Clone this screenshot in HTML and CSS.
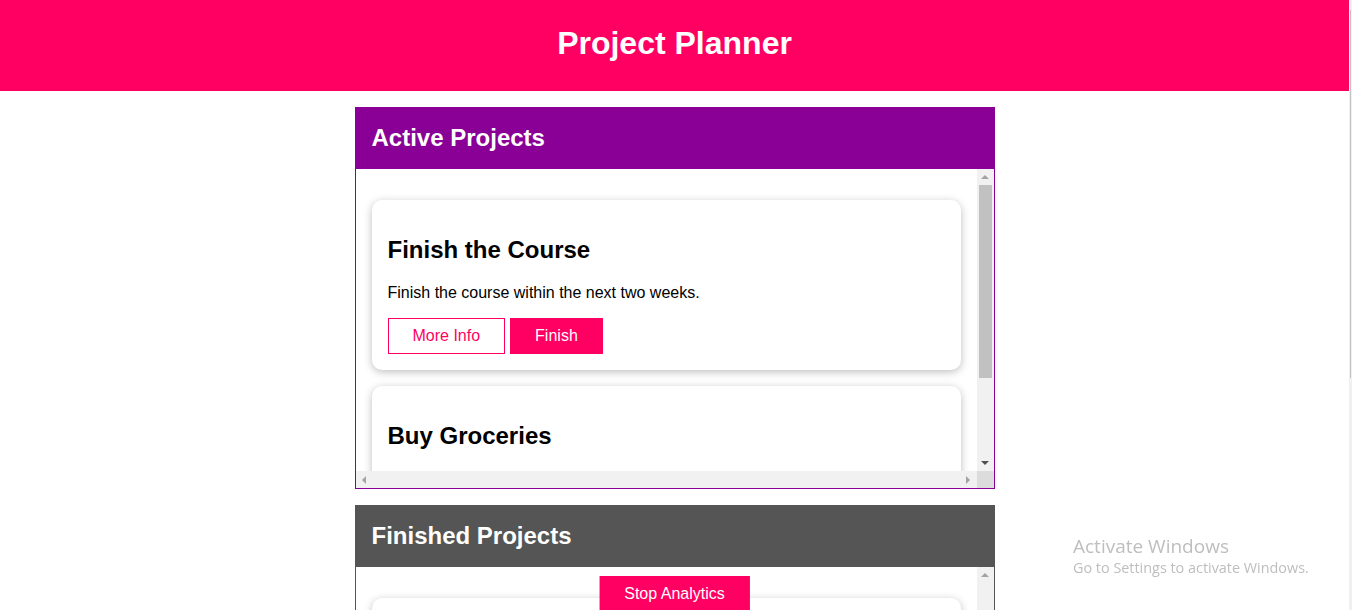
FILE: index.html
```html
<!DOCTYPE html>
<html lang="en">
<head>
<meta charset="utf-8">
<title>Project Planner</title>
<link rel="stylesheet" href="styles.css">
</head>
<body>
<header class="main-header">
  <h1>Project Planner</h1>
</header>
<main class="main">
  <section class="projects projects--active">
    <header class="projects__header">
      <h2>Active Projects</h2>
    </header>
    <div class="projects__box">
      <ul class="projects__list">
        <li class="card">
          <h2>Finish the Course</h2>
          <p>Finish the course within the next two weeks.</p>
          <div class="card__actions">
            <button class="btn btn--alt">More Info</button>
            <button class="btn">Finish</button>
          </div>
        </li>
        <li class="card">
          <h2>Buy Groceries</h2>
          <p>Don't forget to pick up groceries today.</p>
          <div class="card__actions">
            <button class="btn btn--alt">More Info</button>
            <button class="btn">Finish</button>
          </div>
        </li>
      </ul>
      <div class="vbar">
        <span class="sb-btn"><span class="arrow arrow--up"></span></span>
        <span class="sb-thumb"></span>
        <span class="sb-track"></span>
        <span class="sb-btn"><span class="arrow arrow--down"></span></span>
      </div>
      <div class="hbar">
        <span class="sb-btn"><span class="arrow arrow--left"></span></span>
        <span class="sb-track"></span>
        <span class="sb-btn"><span class="arrow arrow--right"></span></span>
      </div>
      <div class="sb-corner"></div>
    </div>
  </section>
  <section class="projects projects--finished">
    <header class="projects__header">
      <h2>Finished Projects</h2>
    </header>
    <div class="projects__box">
      <ul class="projects__list">
        <li class="card">
          <h2>Book Hotel</h2>
          <p>Academind conference takes place in December, don't forget to book a hotel.</p>
          <div class="card__actions">
            <button class="btn btn--alt">More Info</button>
            <button class="btn">Activate</button>
          </div>
        </li>
      </ul>
      <div class="vbar">
        <span class="sb-btn"><span class="arrow arrow--up"></span></span>
        <span class="sb-track"></span>
        <span class="sb-btn"><span class="arrow arrow--down arrow--light"></span></span>
      </div>
      <div class="hbar">
        <span class="sb-btn"><span class="arrow arrow--left"></span></span>
        <span class="sb-track"></span>
        <span class="sb-btn"><span class="arrow arrow--right"></span></span>
      </div>
      <div class="sb-corner"></div>
    </div>
  </section>
</main>
<button class="btn btn--floating">Stop Analytics</button>
<div class="page-scrollbar"><span class="page-scrollbar__thumb"></span></div>
<div class="watermark">
  <div class="watermark__title">Activate Windows</div>
  <div class="watermark__sub">Go to Settings to activate Windows.</div>
</div>
</body>
</html>
```
FILE: styles.css
```css
* {
  box-sizing: border-box;
}

html {
  font-family: "Liberation Sans", Arial, sans-serif;
}

body {
  margin: 0 3px 0 0;
  color: #000;
}

.main-header {
  height: 91px;
  background: #ff0062;
  display: flex;
  align-items: center;
  justify-content: center;
  padding-bottom: 4px;
}

.main-header h1 {
  margin: 0;
  color: #fff;
  font-size: 32px;
  font-weight: bold;
}

.main {
  display: flex;
  flex-direction: column;
  align-items: center;
  gap: 16px;
  padding: 16px 0 94px;
}

.projects {
  width: 640px;
}

.projects__header {
  height: 61px;
  display: flex;
  align-items: center;
  padding: 0 16px;
  border: 1px solid #8a0097;
  background: #8a0097;
}

.projects__header h2 {
  margin: 0;
  color: #fff;
  font-size: 24px;
  font-weight: bold;
}

.projects--finished .projects__header {
  background: #555;
  border-color: #555;
}

.projects__box {
  display: grid;
  grid-template-columns: 1fr 17px;
  grid-template-rows: 302px 17px;
  border: 1px solid #8a0097;
}

.projects--finished .projects__box {
  border-color: #555;
}

.projects__list {
  list-style: none;
  margin: 0;
  padding: 15px 0;
  overflow: hidden;
}

/* fake classic scrollbars */
.vbar,
.hbar {
  display: flex;
  background: #f1f1f1;
}

.vbar {
  flex-direction: column;
}

.sb-btn {
  flex: 0 0 17px;
  width: 17px;
  height: 17px;
  display: flex;
  align-items: center;
  justify-content: center;
}

.sb-track {
  flex: 1;
}

.sb-thumb {
  flex: 0 0 193px;
  margin: -1px 2px 0;
  background: #c1c1c1;
}

.sb-corner {
  background: #dcdcdc;
}

.arrow {
  width: 0;
  height: 0;
  border: 4px solid transparent;
}

.arrow--up {
  border-top-width: 0;
  border-bottom-color: #a3a3a3;
  margin-bottom: 2px;
}

.arrow--down {
  border-bottom-width: 0;
  border-top-color: #505050;
  margin-top: 1px;
}

.arrow--down.arrow--light {
  border-top-color: #a3a3a3;
}

.arrow--left {
  border-left-width: 0;
  border-right-color: #a3a3a3;
}

.arrow--right {
  border-right-width: 0;
  border-left-color: #a3a3a3;
}

.card {
  margin: 16px;
  padding: 16px;
  background: #fff;
  border-radius: 10px;
  box-shadow: 0 2px 8px rgba(0, 0, 0, 0.26);
}

.card h2 {
  margin: 0.83em 0;
  font-size: 24px;
  font-weight: bold;
}

.card p {
  margin: 16px 0;
  font-size: 16px;
}

.card__actions {
  display: flex;
  gap: 5px;
}

.btn {
  font: inherit;
  font-size: 16px;
  line-height: normal;
  padding: 8px 24px;
  height: 36px;
  border: 1px solid #ff0062;
  background: #ff0062;
  color: #fff;
  cursor: pointer;
}

.btn--alt {
  background: #fff;
  color: #ff0062;
}

.btn--floating {
  position: fixed;
  top: 576px;
  left: calc((100% - 3px) / 2);
  transform: translateX(-50%);
}

.page-scrollbar {
  position: fixed;
  top: 0;
  right: 0;
  width: 3px;
  height: 100vh;
  background: #f0f0f0;
  padding-top: 10px;
}

.page-scrollbar__thumb {
  display: block;
  width: 1px;
  height: 368px;
  margin-left: 1px;
  background: #c2c2c2;
}

.watermark {
  position: fixed;
  left: 1073px;
  top: 533px;
  font-family: "Open Sans", "Noto Sans", sans-serif;
  color: #bebebe;
  pointer-events: none;
}

.watermark__title {
  font-size: 19px;
  line-height: 26px;
}

.watermark__sub {
  font-size: 14.4px;
  line-height: 20px;
  margin-top: -1px;
}
```
